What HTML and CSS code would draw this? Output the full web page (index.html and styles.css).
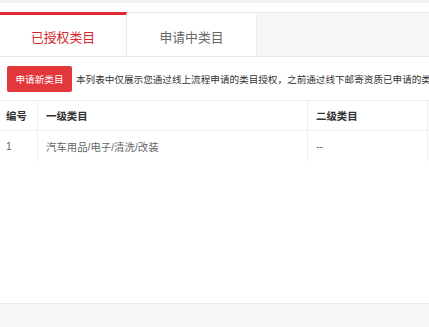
FILE: index.html
```html
<!DOCTYPE html>
<html lang="zh-CN">
<head>
<meta charset="utf-8">
<title>类目授权</title>
<link rel="stylesheet" href="styles.css">
</head>
<body>
<div class="page">
  <div class="topband"></div>
  <div class="tabs">
    <div class="tab active">已授权类目</div>
    <div class="tab">申请中类目</div>
    <div class="tab-fill"></div>
  </div>
  <div class="toolbar">
    <button class="btn-apply">申请新类目</button>
    <span class="notice">本列表中仅展示您通过线上流程申请的类目授权，之前通过线下邮寄资质已申请的类目授权不在此列表中展示</span>
  </div>
  <div class="table-wrap">
    <table class="grid">
      <thead>
        <tr>
          <th class="c-no">编号</th>
          <th class="c-first">一级类目</th>
          <th class="c-second">二级类目</th>
          <th class="c-third"></th>
        </tr>
      </thead>
      <tbody>
        <tr>
          <td class="c-no">1</td>
          <td class="c-first">汽车用品/电子/清洗/改装</td>
          <td class="c-second">--</td>
          <td class="c-third"></td>
        </tr>
      </tbody>
    </table>
  </div>
  <div class="spacer"></div>
  <div class="footer"></div>
</div>
</body>
</html>
```

FILE: styles.css
```css
html, body {
  margin: 0;
  padding: 0;
  background: #ffffff;
  overflow: hidden;
}
body {
  font-family: "Liberation Sans", "Noto Sans CJK SC", sans-serif;
  color: #333333;
}
.page {
  width: 429px;
  height: 327px;
  display: flex;
  flex-direction: column;
  overflow: hidden;
}
.topband {
  height: 3px;
  background: #f2f2f2;
  flex: none;
}
.tabs {
  margin-top: 9px;
  height: 43px;
  display: flex;
  border-top: 1px solid #e9e9e9;
  border-bottom: 1px solid #e9e9e9;
  flex: none;
}
.tab {
  box-sizing: border-box;
  height: 43px;
  display: flex;
  align-items: center;
  justify-content: center;
  font-size: 12.8px;
  color: #666666;
  background: #ffffff;
  border-right: 1px solid #ececec;
  padding-top: 3px;
}
.tab:nth-child(1) {
  width: 127px;
}
.tab:nth-child(2) {
  width: 130px;
}
.tab.active {
  color: #d7262e;
  border-top: 3px solid #e0282e;
  margin-top: -1px;
  height: 44px;
  padding-top: 1px;
}
.tab-fill {
  flex: 1;
  background: #f7f7f7;
}
.toolbar {
  margin-top: 9px;
  padding-left: 7px;
  display: flex;
  align-items: center;
  white-space: nowrap;
  flex: none;
  height: 26px;
}
.btn-apply {
  flex: none;
  width: 65px;
  height: 26px;
  border: none;
  border-radius: 2px;
  background: #e2373b;
  color: #ffffff;
  font-family: inherit;
  font-size: 9.6px;
  padding: 0;
  margin: 0;
}
.notice {
  margin-left: 4px;
  font-size: 9.6px;
  color: #333333;
}
.table-wrap {
  margin-top: 8px;
  flex: none;
}
.grid {
  border-collapse: collapse;
  width: 560px;
  table-layout: fixed;
}
.grid th,
.grid td {
  text-align: left;
  padding: 0 8px;
  font-size: 10.4px;
  border-right: 1px solid #f0f0f0;
}
.grid th {
  height: 29px;
  font-weight: 700;
  color: #333333;
  border-top: 1px solid #eeeeee;
  border-bottom: 1px solid #f0f0f0;
}
.grid td {
  height: 31px;
  color: #666666;
}
.c-no {
  width: 22px;
}
.grid .c-no {
  padding-left: 6px;
  padding-right: 9px;
}
.c-first {
  width: 253px;
}
.c-second {
  width: 103px;
}
.c-third {
  width: 119px;
}
.spacer {
  flex: 1;
}
.footer {
  height: 23px;
  border-top: 1px solid #ebebeb;
  background: #f8f8f8;
  flex: none;
}
```
